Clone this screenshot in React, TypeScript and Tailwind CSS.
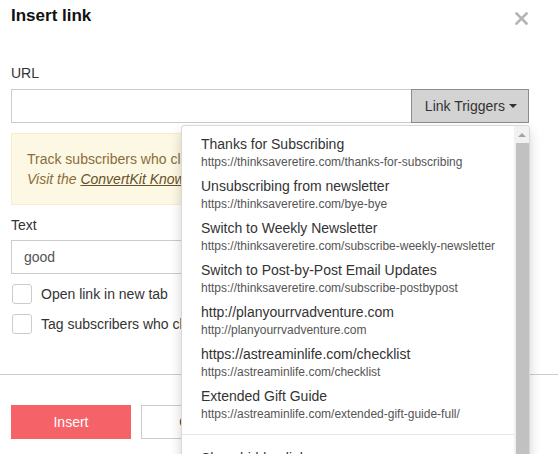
import React from "react";

const items = [
  ["Thanks for Subscribing", "https://thinksaveretire.com/thanks-for-subscribing"],
  ["Unsubscribing from newsletter", "https://thinksaveretire.com/bye-bye"],
  ["Switch to Weekly Newsletter", "https://thinksaveretire.com/subscribe-weekly-newsletter"],
  ["Switch to Post-by-Post Email Updates", "https://thinksaveretire.com/subscribe-postbypost"],
  ["http://planyourrvadventure.com", "http://planyourrvadventure.com"],
  ["https://astreaminlife.com/checklist", "https://astreaminlife.com/checklist"],
  ["Extended Gift Guide", "https://astreaminlife.com/extended-gift-guide-full/"],
];

export default function App() {
  return (
    <div className="relative w-[558px] h-[454px] overflow-hidden bg-white text-[#333] font-['Liberation_Sans',Arial,sans-serif]">
      {/* header */}
      <div className="flex items-start justify-between pl-[11px] pr-[30px] pt-[4px]">
        <h1 className="text-[17px] leading-[24px] font-bold text-[#111]">Insert link</h1>
        <svg width="13" height="13" viewBox="0 0 13 13" className="mt-[8px]">
          <path d="M1.5 1.5 L11.5 11.5 M11.5 1.5 L1.5 11.5" stroke="#b4b4b4" strokeWidth="2.6" strokeLinecap="square" />
        </svg>
      </div>

      {/* body */}
      <div className="pl-[11px] pr-[29px]">
        <div className="mt-[35px] text-[14px] leading-[20px] mb-[6px]">URL</div>
        <div className="flex h-[34px]">
          <div className="flex-1 border border-[#ccc] border-r-0 bg-white" />
          <div className="flex items-center border border-[#8c8c8c] bg-[#d3d3d3] pl-[13px] pr-[11px] text-[14px] text-[#333]">
            Link Triggers
            <span className="ml-[4px] inline-block w-0 h-0 border-l-[4px] border-r-[4px] border-t-[4px] border-l-transparent border-r-transparent border-t-[#333]" />
          </div>
        </div>

        <div className="mt-[10px] border border-[#faebcc] bg-[#fcf8e3] p-[15px] text-[14px] leading-[20px] text-[#8a6d3b]">
          <div>Track subscribers who click this link by adding a tag to them.</div>
          <div className="italic">
            Visit the <span className="underline text-[#66512c]">ConvertKit Knowledge Base</span> to learn more.
          </div>
        </div>

        <div className="mt-[10px] text-[14px] leading-[20px] mb-[5px]">Text</div>
        <div className="h-[34px] border border-[#ccc] flex items-center px-[12px] text-[14px] text-[#555]">good</div>

        <label className="mt-[10px] flex items-center h-[20px] text-[14px]">
          <span className="ml-[1px] w-[20px] h-[20px] border border-[#ccc] rounded-[3px] bg-white" />
          <span className="ml-[9px]">Open link in new tab</span>
        </label>
        <label className="mt-[10px] flex items-center h-[20px] text-[14px]">
          <span className="ml-[1px] w-[20px] h-[20px] border border-[#ccc] rounded-[3px] bg-white" />
          <span className="ml-[9px]">Tag subscribers who click this link</span>
        </label>
      </div>

      <div className="mt-[40px] h-px bg-[#cccccc]" />

      <div className="flex gap-[10px] pl-[11px] mt-[30px]">
        <button className="w-[120px] h-[34px] bg-[#f56267] text-white text-[14px]">Insert</button>
        <button className="w-[120px] h-[34px] border border-[#ccc] bg-white text-[#333] text-[14px]">Cancel</button>
      </div>

      {/* dropdown */}
      <div className="absolute left-[181px] top-[125px] w-[349px] h-[360px] flex overflow-hidden rounded-[4px] border border-[rgba(0,0,0,0.15)] bg-white shadow-[0_6px_12px_rgba(0,0,0,0.175)]">
        <div className="flex-1 pt-[5px]">
          {items.map(([t, u]) => (
            <div key={t} className="px-[19px] py-[3px] whitespace-nowrap">
              <div className="text-[14px] leading-[20px] text-[#333]">{t}</div>
              <div className="text-[12px] leading-[16px] text-[#555]">{u}</div>
            </div>
          ))}
          <div className="my-[9px] h-px bg-[#e5e5e5]" />
          <div className="px-[19px] pt-[4px] text-[14px] leading-[20px] text-[#333]">Show hidden links</div>
        </div>
        <div className="w-[16px] bg-[#f1f1f1] flex flex-col">
          <div className="h-[17px] flex items-center justify-center">
            <span className="inline-block w-0 h-0 border-l-[4px] border-r-[4px] border-b-[4px] border-l-transparent border-r-transparent border-b-[#a3a3a3]" />
          </div>
          <div className="flex-1 ml-[2px] bg-[#c1c1c1]" />
        </div>
      </div>
    </div>
  );
}
